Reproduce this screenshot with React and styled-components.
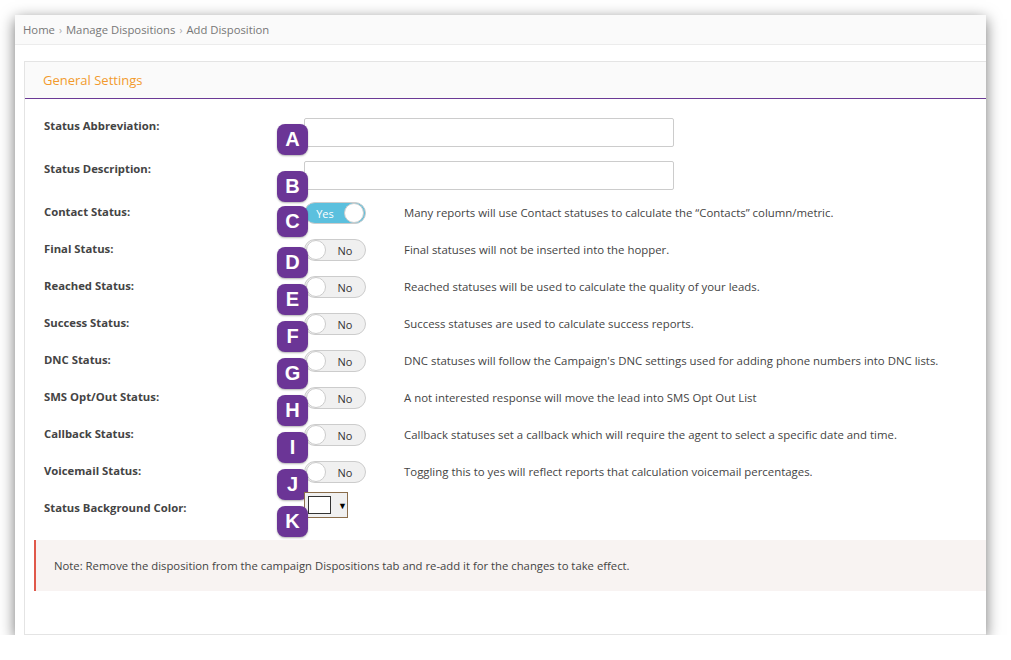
import React from "react";
import styled, { createGlobalStyle } from "styled-components";

const Global = createGlobalStyle`
  body { margin: 0; background: #fff; font-family: "Open Sans", sans-serif; }
`;

const Window = styled.div`
  margin: 15px 0 0 15px;
  width: 971px;
  height: 620px;
  background: #fff;
  box-shadow: 0 4px 14px rgba(0,0,0,0.55);
  overflow: hidden;
  display: flex;
  flex-direction: column;
`;

const Crumbs = styled.div`
  height: 29px;
  background: #fafafa;
  border-bottom: 1px solid #ececec;
  display: flex;
  align-items: center;
  padding-left: 8px;
  font-size: 11.3px;
  color: #777;
  gap: 4px;
`;

const Sep = styled.span`
  color: #aaa;
  font-size: 10px;
`;

const Panel = styled.div`
  margin: 16px 0 0 9px;
  border: 1px solid #e4e4e4;
  border-right: none;
  flex: 1;
  display: flex;
  flex-direction: column;
`;

const PanelHead = styled.div`
  height: 36px;
  background: #fafafa;
  border-bottom: 1px solid #6b3a96;
  display: flex;
  align-items: center;
  padding-left: 18px;
  color: #f29a2e;
  font-size: 13px;
`;

const Form = styled.div`
  padding: 19px 0 0 19px;
  display: flex;
  flex-direction: column;
`;

const Row = styled.div`
  display: grid;
  grid-template-columns: 260px 100px 1fr;
  height: ${({ h }) => h}px;
  align-items: start;
`;

const Label = styled.div`
  font-size: 11.3px;
  font-weight: 700;
  color: #444;
  padding-top: ${({ pt }) => pt}px;
`;

const Control = styled.div`
  position: relative;
`;

const Badge = styled.div`
  position: absolute;
  left: -27px;
  top: ${({ t }) => t}px;
  width: 31px;
  height: 31px;
  border-radius: 8px;
  background: #6b3596;
  color: #fff;
  font-family: "Liberation Sans", Arial, sans-serif;
  font-weight: 700;
  font-size: 20px;
  display: flex;
  align-items: center;
  justify-content: center;
  box-shadow: 0 1px 2px rgba(0,0,0,0.3);
`;

const Input = styled.div`
  width: 368px;
  height: 27px;
  border: 1px solid #ccc;
  border-radius: 2px;
  background: #fff;
`;

const Toggle = styled.div`
  width: 58px;
  height: 20px;
  border: 1px solid #ccc;
  border-radius: 11px;
  background: ${({ on }) => (on ? "#5bc0de" : "#f0f0f0")};
  display: flex;
  align-items: center;
  flex-direction: ${({ on }) => (on ? "row-reverse" : "row")};
  padding: 0 1px;
  box-sizing: content-box;
  position: relative;
  top: -2px;
`;

const Knob = styled.div`
  width: 20px;
  height: 20px;
  border-radius: 50%;
  background: #fff;
  border: 1px solid #ccc;
  box-sizing: border-box;
`;

const ToggleText = styled.span`
  font-size: 11px;
  color: ${({ on }) => (on ? "#fff" : "#333")};
  flex: 1;
  text-align: center;
`;

const Desc = styled.div`
  font-size: 11.4px;
  color: #444;
  padding-top: 1px;
`;

const ColorPick = styled.div`
  width: 44px;
  height: 26px;
  border: 1px solid #8a6d4b;
  background: #f0f0f0;
  display: flex;
  align-items: center;
  gap: 7px;
  padding-left: 3px;
  box-sizing: border-box;
  font-size: 9px;
  position: relative;
  top: -8px;
`;

const Swatch = styled.div`
  width: 23px;
  height: 18px;
  border: 1px solid #333;
  background: #fff;
  box-sizing: border-box;
`;

const Note = styled.div`
  margin: 7px 0 0 9px;
  height: 51px;
  background: #f8f3f2;
  border-left: 2px solid #e0584a;
  display: flex;
  align-items: center;
  padding-left: 18px;
  font-size: 11.3px;
  color: #444;
`;

const toggles = [
  ["C", "Contact Status:", true, "Many reports will use Contact statuses to calculate the “Contacts” column/metric."],
  ["D", "Final Status:", false, "Final statuses will not be inserted into the hopper."],
  ["E", "Reached Status:", false, "Reached statuses will be used to calculate the quality of your leads."],
  ["F", "Success Status:", false, "Success statuses are used to calculate success reports."],
  ["G", "DNC Status:", false, "DNC statuses will follow the Campaign's DNC settings used for adding phone numbers into DNC lists."],
  ["H", "SMS Opt/Out Status:", false, "A not interested response will move the lead into SMS Opt Out List"],
  ["I", "Callback Status:", false, "Callback statuses set a callback which will require the agent to select a specific date and time."],
  ["J", "Voicemail Status:", false, "Toggling this to yes will reflect reports that calculation voicemail percentages."],
];

export default function App() {
  return (
    <>
      <Global />
      <Window>
        <Crumbs>
          Home <Sep>›</Sep> Manage Dispositions <Sep>›</Sep> Add Disposition
        </Crumbs>
        <Panel>
          <PanelHead>General Settings</PanelHead>
          <Form>
            <Row h={43}>
              <Label pt={0}>Status Abbreviation:</Label>
              <Control>
                <Input />
                <Badge t={6}>A</Badge>
              </Control>
            </Row>
            <Row h={43}>
              <Label pt={0}>Status Description:</Label>
              <Control>
                <Input />
                <Badge t={10}>B</Badge>
              </Control>
            </Row>
            {toggles.map(([b, l, on, d]) => (
              <Row h={37} key={b}>
                <Label pt={0}>{l}</Label>
                <Control>
                  <Toggle on={on}>
                    <Knob />
                    <ToggleText on={on}>{on ? "Yes" : "No"}</ToggleText>
                  </Toggle>
                  <Badge t={on ? 2 : 6}>{b}</Badge>
                </Control>
                <Desc>{d}</Desc>
              </Row>
            ))}
            <Row h={33}>
              <Label pt={0}>Status Background Color:</Label>
              <Control>
                <ColorPick>
                  <Swatch />▼
                </ColorPick>
                <Badge t={6}>K</Badge>
              </Control>
            </Row>
          </Form>
          <Note>
            Note: Remove the disposition from the campaign Dispositions tab and re-add it for the changes to take effect.
          </Note>
        </Panel>
      </Window>
    </>
  );
}
